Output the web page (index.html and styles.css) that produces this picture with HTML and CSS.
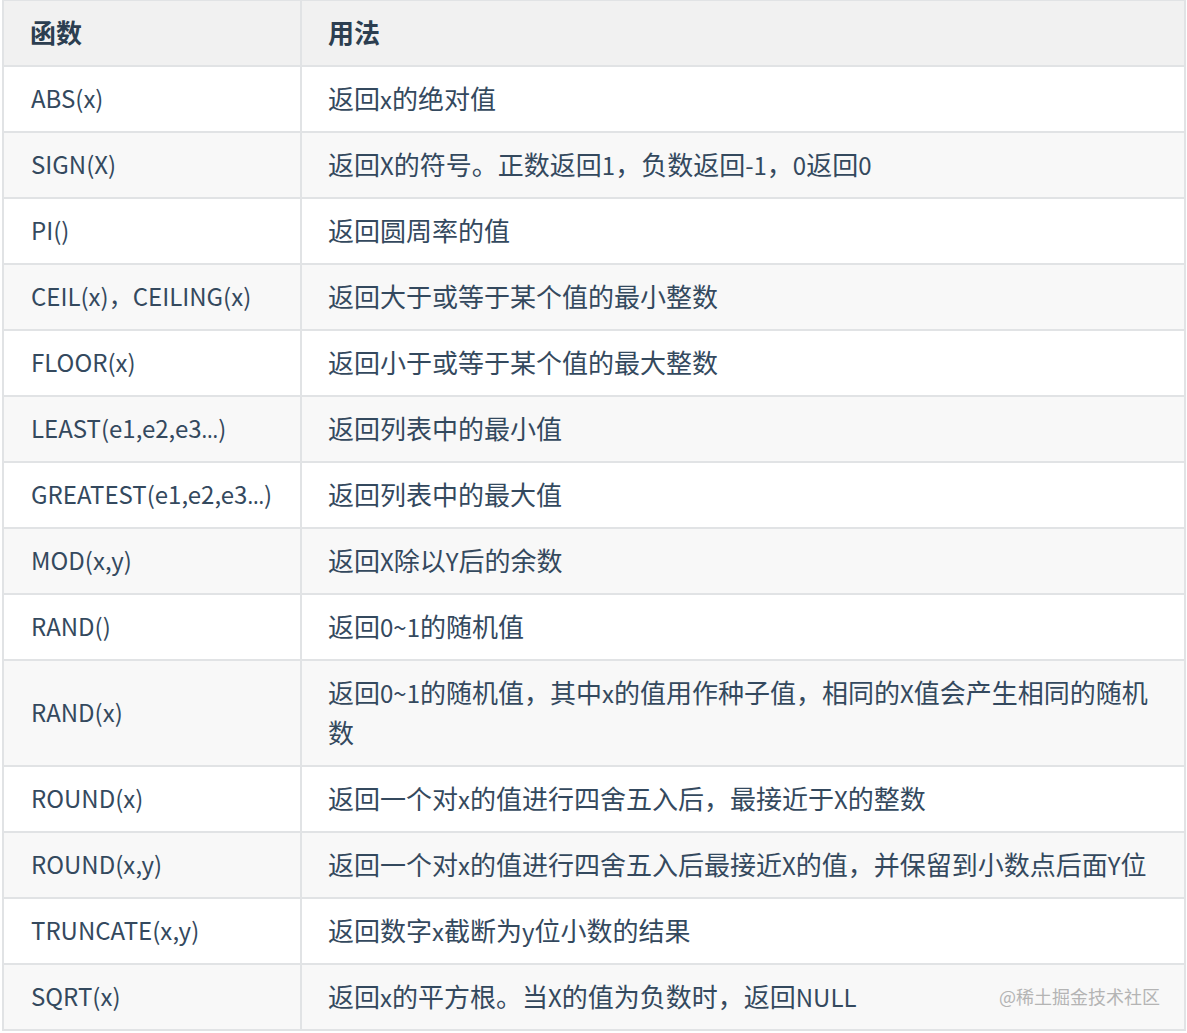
FILE: index.html
```html
<!DOCTYPE html>
<html lang="zh-CN">
<head>
<meta charset="utf-8">
<title>函数</title>
<link rel="stylesheet" href="styles.css">
</head>
<body>
<div class="page">
<table class="fn-table">
<colgroup><col class="c1"><col class="c2"></colgroup>
<thead>
<tr><th>函数</th><th>用法</th></tr>
</thead>
<tbody>
<tr><td>ABS(x)</td><td>返回<span class="en">x</span>的绝对值</td></tr>
<tr><td>SIGN(X)</td><td>返回<span class="en">X</span>的符号。正数返回<span class="en">1</span>，负数返回<span class="en">-1</span>，<span class="en">0</span>返回<span class="en">0</span></td></tr>
<tr><td>PI()</td><td>返回圆周率的值</td></tr>
<tr><td>CEIL(x)，CEILING(x)</td><td>返回大于或等于某个值的最小整数</td></tr>
<tr><td>FLOOR(x)</td><td>返回小于或等于某个值的最大整数</td></tr>
<tr><td>LEAST(e1,e2,e3<span class="ell">…</span>)</td><td>返回列表中的最小值</td></tr>
<tr><td>GREATEST(e1,e2,e3<span class="ell">…</span>)</td><td>返回列表中的最大值</td></tr>
<tr><td>MOD(x,y)</td><td>返回<span class="en">X</span>除以<span class="en">Y</span>后的余数</td></tr>
<tr><td>RAND()</td><td>返回<span class="en">0~1</span>的随机值</td></tr>
<tr><td>RAND(x)</td><td>返回<span class="en">0~1</span>的随机值，其中<span class="en">x</span>的值用作种子值，相同的<span class="en">X</span>值会产生相同的随机数</td></tr>
<tr><td>ROUND(x)</td><td>返回一个对<span class="en">x</span>的值进行四舍五入后，最接近于<span class="en">X</span>的整数</td></tr>
<tr><td>ROUND(x,y)</td><td>返回一个对<span class="en">x</span>的值进行四舍五入后最接近<span class="en">X</span>的值，并保留到小数点后面<span class="en">Y</span>位</td></tr>
<tr><td>TRUNCATE(x,y)</td><td>返回数字<span class="en">x</span>截断为<span class="en">y</span>位小数的结果</td></tr>
<tr><td>SQRT(x)</td><td>返回<span class="en">x</span>的平方根。当<span class="en">X</span>的值为负数时，返回<span class="en">NULL</span></td></tr>
</tbody>
</table>
<div class="watermark">@稀土掘金技术社区</div>
</div>
</body>
</html>
```

FILE: styles.css
```css
html, body {
  margin: 0;
  padding: 0;
  background: #ffffff;
}

.page {
  position: relative;
  width: 1187px;
  height: 1033px;
  overflow: hidden;
}

.fn-table {
  border-collapse: collapse;
  margin: 0 0 0 2px;
  width: 1184px;
  table-layout: fixed;
  font-family: "Noto Sans CJK SC", "Noto Sans", sans-serif;
  font-size: 26px;
  line-height: 40px;
  color: #34495e;
}

.c1 { width: 298px; }

.fn-table th,
.fn-table td {
  border: 2px solid #e1e3e5;
  padding: 11px 26px 13px 26px;
  text-align: left;
  vertical-align: middle;
}

.fn-table td:first-child {
  font-size: 24px;
  padding-left: 27px;
}

.fn-table thead th {
  border-top-width: 1px;
  padding-top: 11px;
  padding-bottom: 13px;
  background: #f1f1f1;
  font-weight: 700;
  color: #2c3e50;
}

.fn-table tbody tr:nth-child(2n) {
  background: #f8f8f8;
}

.en {
  font-size: 24px;
  line-height: 38px;
}

.ell {
  font-family: "Noto Sans", sans-serif;
  font-size: 21px;
  line-height: 30px;
}

.watermark {
  position: absolute;
  right: 27px;
  bottom: 24px;
  font-family: "Noto Sans CJK SC", sans-serif;
  font-size: 18px;
  line-height: 26px;
  color: #b4b4b4;
}
```
